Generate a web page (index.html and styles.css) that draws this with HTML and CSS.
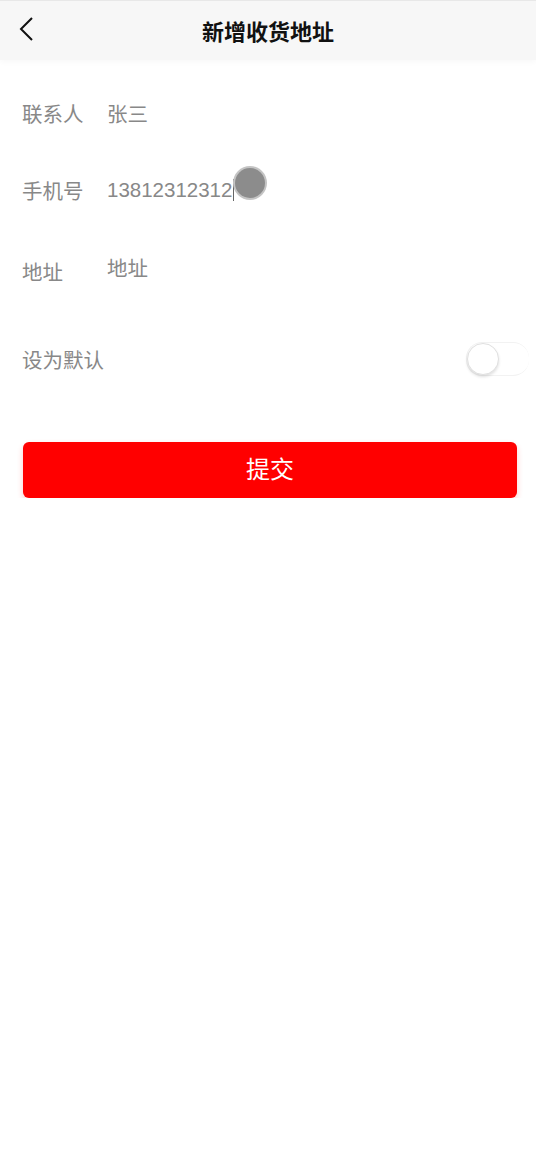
FILE: index.html
```html
<!DOCTYPE html>
<html lang="zh-CN">
<head>
    <meta charset="UTF-8">
    <meta name="viewport" content="width=device-width, initial-scale=1.0">
    <title>新增收货地址</title>
    <link rel="stylesheet" href="styles.css">
</head>
<body>
    <div class="nav-bar">
        <span class="back">
            <svg width="16" height="26" viewBox="0 0 16 26">
                <path d="M14 2 L3 13 L14 24" fill="none" stroke="#111" stroke-width="2"/>
            </svg>
        </span>
        <h1>新增收货地址</h1>
    </div>

    <div class="form">
        <div class="field row-name">
            <label>联系人</label>
            <input type="text" value="张三">
        </div>
        <div class="field row-phone">
            <label>手机号</label>
            <div class="phone-wrap">
                <input type="text" value="13812312312"><span class="caret"></span>
                <span class="touch"></span>
            </div>
        </div>
        <div class="field row-addr">
            <label>地址</label>
            <input type="text" value="地址">
        </div>
        <div class="field row-default">
            <label>设为默认</label>
            <span class="switch"><span class="knob"></span></span>
        </div>
    </div>

    <div class="submit-box">
        <button class="submit">提交</button>
    </div>
</body>
</html>
```

FILE: styles.css
```css
body {
    margin: 0;
    background-color: #fff;
    font-family: "Noto Sans CJK SC", "Liberation Sans", sans-serif;
}

.nav-bar {
    position: relative;
    height: 59px;
    border-top: 1px solid #e8e8e8;
    background-color: #f7f7f7;
    display: flex;
    align-items: center;
    justify-content: center;
    box-shadow: 0 2px 6px rgba(0, 0, 0, 0.03);
}

.nav-bar h1 {
    margin: 0;
    font-size: 22px;
    font-weight: bold;
    color: #111;
    padding-bottom: 2px;
}

.back {
    position: absolute;
    left: 18px;
    top: 15px;
}

.form {
    padding: 0 22px;
}

.field {
    display: flex;
    align-items: center;
    color: #888;
    font-size: 20.5px;
}

.field label {
    width: 85px;
}

.field input {
    border: none;
    outline: none;
    padding: 0;
    font-family: "Liberation Sans", "Noto Sans CJK SC", sans-serif;
    font-size: 20.5px;
    color: #888;
    width: 126px;
    background: transparent;
}

.row-name {
    height: 30px;
    margin-top: 38px;
}

.row-name input {
    font-family: "Noto Sans CJK SC", sans-serif;
}

.row-phone {
    height: 30px;
    margin-top: 47px;
}

.phone-wrap {
    position: relative;
    display: flex;
    align-items: center;
}

.caret {
    display: inline-block;
    width: 1px;
    height: 22px;
    background-color: #666;
}

.touch {
    position: absolute;
    left: 128px;
    top: -10px;
    width: 30px;
    height: 30px;
    border-radius: 50%;
    background-color: #8c8c8c;
    box-shadow: 0 0 0 2px #c4c4c4;
}

.row-addr {
    height: 30px;
    margin-top: 49px;
}

.row-addr label {
    padding-top: 4px;
}

.row-addr input {
    font-family: "Noto Sans CJK SC", sans-serif;
    margin-top: -4px;
}

.row-default {
    height: 34px;
    margin-top: 58px;
    justify-content: space-between;
    margin-right: -22px;
}

.switch {
    position: relative;
    width: 62px;
    height: 32px;
    border-radius: 16px;
    border: 1px solid #f2f2f2;
    border-right: none;
    background-color: #fff;
    margin-right: 7px;
}

.knob {
    position: absolute;
    left: 0;
    top: 0;
    width: 30px;
    height: 30px;
    border-radius: 50%;
    background-color: #fff;
    border: 1px solid #e0e0e0;
    box-shadow: 0 2px 3px rgba(0, 0, 0, 0.12);
}

.submit-box {
    padding: 0 19px 0 23px;
    margin-top: 66px;
}

.submit {
    width: 100%;
    height: 56px;
    border: none;
    border-radius: 6px;
    background-color: #ff0000;
    color: #fff;
    font-family: "Noto Sans CJK SC", sans-serif;
    font-size: 24px;
    padding: 0 0 5px;
    box-shadow: 0 3px 6px rgba(255, 0, 0, 0.2);
}
```
